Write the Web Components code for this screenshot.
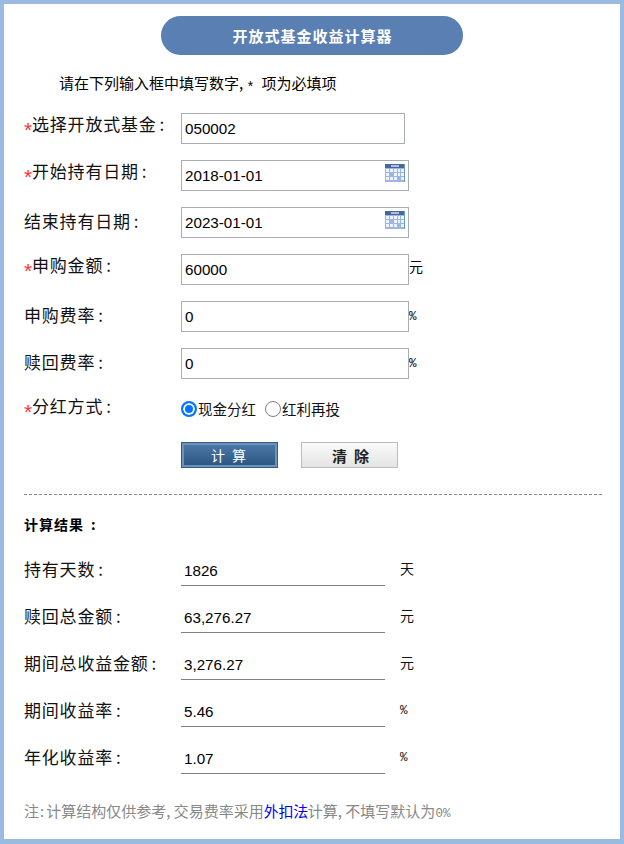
<!DOCTYPE html>
<html lang="zh">
<head>
<meta charset="utf-8">
<title>开放式基金收益计算器</title>
<style>
  html, body { margin: 0; background: #fff; }
  body { font-family: "Noto Sans CJK SC", "Liberation Sans", sans-serif; color: #000; }
</style>
</head>
<body>
<calc-page>
  <calc-title>开放式基金收益计算器</calc-title>
  <calc-hint>请在下列输入框中填写数字</calc-hint>

  <form-row required label="选择开放式基金:"><text-box>050002</text-box></form-row>
  <form-row required label="开始持有日期:"><text-box wide calendar>2018-01-01</text-box></form-row>
  <form-row label="结束持有日期:"><text-box wide calendar>2023-01-01</text-box></form-row>
  <form-row required label="申购金额:"><text-box wide unit="元">60000</text-box></form-row>
  <form-row label="申购费率:"><text-box wide unit="%">0</text-box></form-row>
  <form-row label="赎回费率:"><text-box wide unit="%">0</text-box></form-row>
  <radio-row required label="分红方式:"></radio-row>
  <button-row></button-row>

  <result-panel>
    <result-row label="持有天数:" unit="天">1826</result-row>
    <result-row label="赎回总金额:" unit="元">63,276.27</result-row>
    <result-row label="期间总收益金额:" unit="元">3,276.27</result-row>
    <result-row label="期间收益率:" unit="%">5.46</result-row>
    <result-row label="年化收益率:" unit="%">1.07</result-row>
  </result-panel>

  <calc-note></calc-note>
</calc-page>

<script>
const CJK = `"Noto Sans CJK SC", "Liberation Sans", sans-serif`;
const MONO = `"Liberation Mono", monospace`;

class CalcPage extends HTMLElement {
  constructor() {
    super();
    this.attachShadow({ mode: "open" });
    this.shadowRoot.innerHTML = `
      <style>
        :host {
          display: block;
          box-sizing: border-box;
          width: 624px;
          height: 844px;
          border: 4px solid #9abbdf;
          border-bottom-width: 5px;
          background: #fff;
          overflow: hidden;
        }
      </style>
      <slot></slot>`;
  }
}

class CalcTitle extends HTMLElement {
  constructor() {
    super();
    this.attachShadow({ mode: "open" });
    this.shadowRoot.innerHTML = `
      <style>
        :host {
          display: flex;
          align-items: center;
          justify-content: center;
          box-sizing: border-box;
          width: 302px;
          height: 39px;
          margin: 12px 0 0 157px;
          border-radius: 20px;
          background: #5a7fb2;
          color: #fff;
          font: bold 15px/1 ${CJK};
          letter-spacing: 1px;
          padding-left: 1px;
        }
      </style>
      <slot></slot>`;
  }
}

class CalcHint extends HTMLElement {
  constructor() {
    super();
    this.attachShadow({ mode: "open" });
    this.shadowRoot.innerHTML = `
      <style>
        :host {
          display: block;
          height: 20px;
          margin: 18px 0 20px 55px;
          font: 15px/20px ${CJK};
          white-space: nowrap;
        }
        .star { font: 14px/20px ${MONO}; vertical-align: -3px; margin: 0 7px 0 3px; }
      </style>
      <slot></slot><span>,</span><span class="star">*</span><span>项为必填项</span>`;
  }
}

const rowStyles = `
  :host {
    display: flex;
    align-items: center;
    height: 31px;
    margin-left: 20px;
    margin-bottom: 16px;
  }
  .label {
    display: flex;
    width: 157px;
    flex: none;
    margin-bottom: 3px;
    font: 17px/24px ${CJK};
    letter-spacing: .8px;
    white-space: nowrap;
    color: #111;
  }
  .star { color: #f33; width: 8px; padding-top: 6px; font: 21px/24px "Liberation Sans", sans-serif; letter-spacing: 0; }
  .colon { margin-left: 3px; }
`;

const splitColon = text => text.replace(":", `<span class="colon">:</span>`);

class FormRow extends HTMLElement {
  constructor() {
    super();
    this.attachShadow({ mode: "open" });
    const star = this.hasAttribute("required") ? `<span class="star">*</span>` : "";
    this.shadowRoot.innerHTML = `
      <style>${rowStyles}</style>
      <div class="label">${star}<span>${splitColon(this.getAttribute("label"))}</span></div>
      <slot></slot>`;
  }
}

class TextBox extends HTMLElement {
  constructor() {
    super();
    this.attachShadow({ mode: "open" });
    const unit = this.getAttribute("unit");
    const icon = this.hasAttribute("calendar") ? CalendarIcon : "";
    this.shadowRoot.innerHTML = `
      <style>
        :host { display: flex; align-items: center; }
        .box {
          position: relative;
          box-sizing: border-box;
          width: ${this.hasAttribute("wide") ? 228 : 224}px;
          height: 31px;
          border: 1px solid #a9adb3;
          padding-left: 3px;
          font: 15.2px/29px "Liberation Sans", Arial, sans-serif;
          color: #000;
        }
        svg { position: absolute; right: 3px; top: 3px; }
        .unit { font: 14px/20px ${CJK}; margin-top: -7px; }
        .unit.pct { font: 12.5px/14px ${MONO}; margin-top: 0; }
      </style>
      <div class="box"><slot></slot>${icon}</div>
      ${unit ? `<span class="unit${unit === "%" ? " pct" : ""}">${unit}</span>` : ""}`;
  }
}

const CalendarIcon = `
  <svg width="20" height="18" viewBox="0 0 20 18">
    <rect width="20" height="18" fill="#9db5e3"/>
    <rect width="20" height="4" fill="#45689f"/>
    <rect x="6" y="1" width="8" height="2" fill="#aebfd8"/>
    <rect x="19" y="0" width="1" height="18" fill="#6aa0a8"/>
    <g fill="#eef3fb">
      <rect x="1" y="5" width="3" height="3"/><rect x="5" y="5" width="3" height="3"/><rect x="9" y="5" width="3" height="3"/><rect x="13" y="5" width="2" height="3"/><rect x="16" y="5" width="3" height="3"/>
      <rect x="1" y="9" width="3" height="3"/><rect x="9" y="9" width="3" height="3"/><rect x="13" y="9" width="2" height="3"/><rect x="16" y="9" width="3" height="3"/>
      <rect x="1" y="13" width="3" height="3"/><rect x="5" y="13" width="3" height="3"/><rect x="9" y="13" width="3" height="3"/><rect x="16" y="13" width="3" height="3"/>
    </g>
  </svg>`;

class RadioRow extends HTMLElement {
  constructor() {
    super();
    this.attachShadow({ mode: "open" });
    this.shadowRoot.innerHTML = `
      <style>
        ${rowStyles}
        .opt { display: flex; align-items: center; margin: 0 9px 4px 0; font: 14.5px/20px ${CJK}; color: #111; }
        .dot { box-sizing: border-box; width: 16px; height: 16px; margin-right: 1px; border-radius: 50%; border: 1px solid #808080; background: #fff; }
        .dot.on { border: 2px solid #0075ff; box-shadow: inset 0 0 0 2px #fff; background: #0075ff; }
      </style>
      <div class="label">
        <span class="star">*</span><span>${splitColon(this.getAttribute("label"))}</span>
      </div>
      <div class="opt"><span class="dot on"></span>现金分红</div>
      <div class="opt"><span class="dot"></span>红利再投</div>`;
  }
}

class ButtonRow extends HTMLElement {
  constructor() {
    super();
    this.attachShadow({ mode: "open" });
    this.shadowRoot.innerHTML = `
      <style>
        :host { display: flex; gap: 23px; margin: 0 0 0 177px; height: 26px; }
        .btn {
          display: flex; align-items: center; justify-content: center;
          box-sizing: border-box; width: 97px; height: 26px;
        }
        .go {
          font: 14px/1 ${CJK}; letter-spacing: 7px; text-indent: 5px;
          color: #fff; border: 1px solid #26608a;
          background: linear-gradient(#4f7aa8, #2b5480);
          box-shadow: inset 0 0 0 2px #6f92b6;
        }
        .clear {
          font: bold 15px/1 ${CJK}; letter-spacing: 7px; text-indent: 9px;
          color: #222; border: 1px solid #bdbdbd;
          background: linear-gradient(#fafafa, #e4e4e4);
        }
      </style>
      <div class="btn go">计算</div>
      <div class="btn clear">清除</div>`;
  }
}

class ResultPanel extends HTMLElement {
  constructor() {
    super();
    this.attachShadow({ mode: "open" });
    this.shadowRoot.innerHTML = `
      <style>
        :host { display: block; margin: 26px 18px 0 20px; border-top: 1px dashed #888; padding-top: 19px; }
        h3 { margin: 0 0 20px; height: 20px; font: bold 14px/20px ${CJK}; letter-spacing: 1px; }
        .colon { margin-left: 7px; }
      </style>
      <h3>计算结果<span class="colon">:</span></h3>
      <slot></slot>`;
  }
}

class ResultRow extends HTMLElement {
  constructor() {
    super();
    this.attachShadow({ mode: "open" });
    const unit = this.getAttribute("unit");
    this.shadowRoot.innerHTML = `
      <style>
        ${rowStyles}
        :host { margin-left: 0; height: 32px; margin-bottom: 15px; align-items: flex-start; }
        .label { line-height: 30px; margin: 0; }
        .val {
          box-sizing: border-box; width: 204px; height: 32px; padding-left: 3px;
          border-bottom: 1px solid #808080;
          font: 15.2px/33px "Liberation Sans", Arial, sans-serif; color: #000;
        }
        .unit { margin-left: 15px; font: 14px/28px ${CJK}; color: #111; }
        .unit.pct { font: 12.5px/32px ${MONO}; }
      </style>
      <div class="label"><span>${splitColon(this.getAttribute("label"))}</span></div>
      <div class="val"><slot></slot></div>
      <span class="unit${unit === "%" ? " pct" : ""}">${unit}</span>`;
  }
}

class CalcNote extends HTMLElement {
  constructor() {
    super();
    this.attachShadow({ mode: "open" });
    this.shadowRoot.innerHTML = `
      <style>
        :host { display: block; margin: 27px 0 0 20px; font: 15px/20px ${CJK}; color: #888; white-space: nowrap; }
        .colon { margin: 0 2px 0 1px; }
        b { font-weight: normal; color: #00f; letter-spacing: -.3px; }
        .latin { font: 12.5px/20px ${MONO}; }
      </style>
      注<span class="colon">:</span>计算结构仅供参考, 交易费率采用<b>外扣法</b>计算, 不填写默认为<span class="latin">0%</span>`;
  }
}

customElements.define("calc-page", CalcPage);
customElements.define("calc-title", CalcTitle);
customElements.define("calc-hint", CalcHint);
customElements.define("form-row", FormRow);
customElements.define("text-box", TextBox);
customElements.define("radio-row", RadioRow);
customElements.define("button-row", ButtonRow);
customElements.define("result-panel", ResultPanel);
customElements.define("result-row", ResultRow);
customElements.define("calc-note", CalcNote);
</script>
</body>
</html>
